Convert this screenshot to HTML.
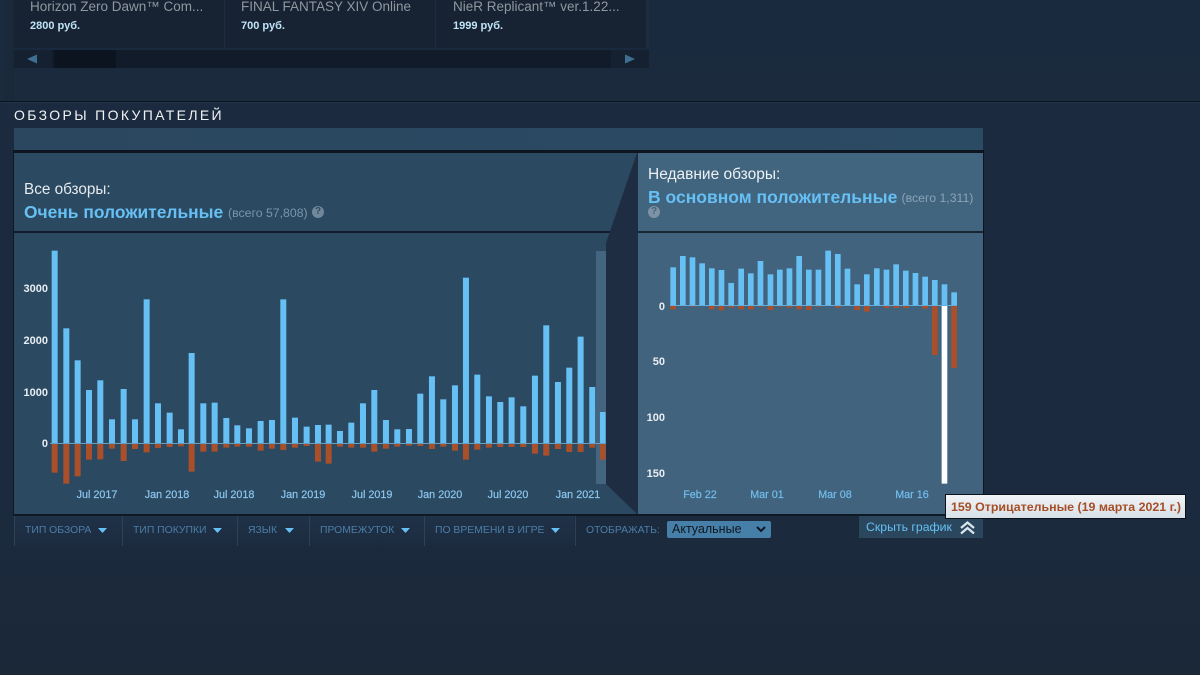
<!DOCTYPE html>
<html><head><meta charset="utf-8"><title>Обзоры покупателей</title>
<style>
html,body{margin:0;padding:0;width:1200px;height:675px;overflow:hidden;background:#1b2838;font-family:"Liberation Sans",Arial,sans-serif}
div,span{position:absolute;white-space:nowrap}
.y{width:30px;text-align:right;font-size:11px;line-height:13px;font-weight:bold;color:#e8eef3}
.x{top:489px;width:60px;text-align:center;font-size:10.8px;line-height:13px;color:#8cc6ee;-webkit-text-stroke:.2px #8cc6ee}
.x2{color:#72bdec;-webkit-text-stroke:.2px #72bdec}
.f{top:524px;font-size:10.4px;line-height:13px;color:#4b7ea8}
.t{top:-1px;font-size:13.5px;line-height:16px;color:#8f98a0}
.p{top:19px;font-size:11px;line-height:14px;color:#bfe3f7;font-weight:bold}
.s{top:516px;width:1px;height:30px;background:#2c4258}
</style></head><body>
<div style="left:0;top:0;width:1200px;height:675px;background:linear-gradient(#1a2a3e 0,#1b2a3d 101px,#1b2a3e 101px,#1b2a3e 500px,#1b2838 675px)"></div>
<div style="left:0;top:0;width:14px;height:100px;background:linear-gradient(90deg,#1b2a3e,#1a2739)"></div>
<!-- carousel -->
<div style="left:14px;top:0;width:635px;height:48px;background:#172232"></div>
<div style="left:224px;top:0;width:1px;height:48px;background:#1d2c3f"></div>
<div style="left:435px;top:0;width:1px;height:48px;background:#1d2c3f"></div>
<div style="left:646px;top:0;width:3px;height:48px;background:#1d2c3f"></div>
<div style="left:14px;top:50px;width:635px;height:18px;background:#111b29"></div>
<div style="left:14px;top:50px;width:38px;height:18px;background:#152131"></div>
<div style="left:611px;top:50px;width:38px;height:18px;background:#152131"></div>
<div style="left:54px;top:50px;width:62px;height:18px;background:#0c1420;border-radius:2px"></div>
<svg style="position:absolute;left:0;top:50px" width="660" height="18"><polygon points="27,9 37,4.500 37,13.500" fill="#3e6f92"/><polygon points="635,9 625,4.500 625,13.500" fill="#3e6f92"/></svg>
<div class="t" style="left:30px">Horizon Zero Dawn™ Com...</div>
<div class="t" style="left:241px">FINAL FANTASY XIV Online</div>
<div class="t" style="left:453px">NieR Replicant™ ver.1.22...</div>
<div class="p" style="left:30px">2800 руб.</div>
<div class="p" style="left:241px">700 руб.</div>
<div class="p" style="left:453px">1999 руб.</div>
<!-- heading -->
<div style="left:0;top:101px;width:1200px;height:1px;background:#0b111b"></div>
<div style="left:0;top:102px;width:1200px;height:1px;background:#24364b"></div>
<div style="left:14px;top:107px;font-size:14px;line-height:16px;letter-spacing:2.35px;color:#f0f2f4">ОБЗОРЫ ПОКУПАТЕЛЕЙ</div>
<!-- panels -->
<div style="left:14px;top:128px;width:969px;height:22px;background:linear-gradient(90deg,#2b4760,#2b4a63)"></div>
<div style="left:13px;top:150px;width:971px;height:3px;background:#0e1520"></div>
<div style="left:13px;top:153px;width:1px;height:361px;background:#101a27"></div>
<div style="left:14px;top:153px;width:623px;height:78px;background:#2b4961"></div>
<div style="left:14px;top:231px;width:623px;height:2px;background:#111c2a"></div>
<div style="left:14px;top:233px;width:623px;height:281px;background:#2b4961"></div>
<div style="left:638px;top:153px;width:345px;height:78px;background:#41647f"></div>
<div style="left:638px;top:231px;width:345px;height:2px;background:#182736"></div>
<div style="left:638px;top:233px;width:345px;height:281px;background:#41637e"></div>
<div style="left:983px;top:150px;width:1px;height:364px;background:#0e1520"></div>
<svg style="position:absolute;left:0;top:0" width="700" height="520"><polygon points="637,153 638,153 638,514 637,514 606,484 606,243" fill="#1f2d42"/></svg>
<div style="left:596px;top:251px;width:10px;height:233px;background:#44657f"></div>
<div style="left:13px;top:514px;width:971px;height:2px;background:#0f1825"></div>
<!-- charts -->
<svg style="position:absolute;left:0;top:240px" width="640" height="300"><g fill="#66c0f4" transform="scale(0.3333)">
<rect x="155" y="32" width="18" height="578"/><rect x="190" y="265" width="18" height="345"/><rect x="224" y="361" width="18" height="249"/><rect x="258" y="450" width="18" height="160"/><rect x="292" y="421" width="18" height="189"/><rect x="327" y="538" width="18" height="72"/><rect x="362" y="447" width="18" height="163"/><rect x="396" y="538" width="18" height="72"/><rect x="431" y="178" width="18" height="432"/><rect x="465" y="490" width="18" height="120"/><rect x="500" y="518" width="18" height="92"/><rect x="534" y="568" width="18" height="42"/><rect x="566" y="339" width="18" height="271"/><rect x="601" y="490" width="18" height="120"/><rect x="635" y="488" width="18" height="122"/><rect x="670" y="534" width="18" height="76"/><rect x="703" y="556" width="18" height="54"/><rect x="738" y="565" width="18" height="45"/><rect x="773" y="543" width="18" height="67"/><rect x="807" y="540" width="18" height="70"/><rect x="841" y="178" width="18" height="432"/><rect x="876" y="533" width="18" height="77"/><rect x="911" y="560" width="18" height="50"/><rect x="945" y="555" width="18" height="55"/>
<rect x="977" y="554" width="18" height="56"/><rect x="1011" y="573" width="18" height="37"/><rect x="1045" y="548" width="18" height="62"/><rect x="1080" y="490" width="18" height="120"/><rect x="1114" y="450" width="18" height="160"/><rect x="1149" y="540" width="18" height="70"/><rect x="1183" y="568" width="18" height="42"/><rect x="1218" y="567" width="18" height="43"/><rect x="1252" y="461" width="18" height="149"/><rect x="1287" y="409" width="18" height="201"/><rect x="1321" y="478" width="18" height="132"/><rect x="1356" y="436" width="18" height="174"/><rect x="1389" y="113" width="18" height="497"/><rect x="1423" y="404" width="18" height="206"/><rect x="1458" y="469" width="18" height="141"/><rect x="1492" y="486" width="18" height="124"/><rect x="1526" y="472" width="18" height="138"/><rect x="1561" y="499" width="18" height="111"/><rect x="1596" y="407" width="18" height="203"/><rect x="1630" y="256" width="18" height="354"/><rect x="1665" y="426" width="18" height="184"/><rect x="1699" y="383" width="18" height="227"/><rect x="1733" y="290" width="18" height="320"/><rect x="1768" y="441" width="18" height="169"/><rect x="1800" y="516" width="17" height="94"/>
</g><g fill="#a9502a" transform="scale(0.3333)">
<rect x="155" y="612" width="18" height="86"/><rect x="190" y="612" width="18" height="119"/><rect x="224" y="612" width="18" height="97"/><rect x="258" y="612" width="18" height="47"/><rect x="292" y="612" width="18" height="46"/><rect x="327" y="612" width="18" height="14"/><rect x="362" y="612" width="18" height="51"/><rect x="396" y="612" width="18" height="15"/><rect x="431" y="612" width="18" height="25"/><rect x="465" y="612" width="18" height="12"/><rect x="500" y="612" width="18" height="9"/><rect x="534" y="612" width="18" height="7"/><rect x="566" y="612" width="18" height="83"/><rect x="601" y="612" width="18" height="23"/><rect x="635" y="612" width="18" height="23"/><rect x="670" y="612" width="18" height="11"/><rect x="703" y="612" width="18" height="8"/><rect x="738" y="612" width="18" height="8"/><rect x="773" y="612" width="18" height="20"/><rect x="807" y="612" width="18" height="14"/><rect x="841" y="612" width="18" height="18"/><rect x="876" y="612" width="18" height="11"/><rect x="911" y="612" width="18" height="6"/><rect x="945" y="612" width="18" height="53"/>
<rect x="977" y="612" width="18" height="59"/><rect x="1011" y="612" width="18" height="8"/><rect x="1045" y="612" width="18" height="11"/><rect x="1080" y="612" width="18" height="11"/><rect x="1114" y="612" width="18" height="23"/><rect x="1149" y="612" width="18" height="14"/><rect x="1183" y="612" width="18" height="8"/><rect x="1218" y="612" width="18" height="5"/><rect x="1252" y="612" width="18" height="6"/><rect x="1287" y="612" width="18" height="15"/><rect x="1321" y="612" width="18" height="8"/><rect x="1356" y="612" width="18" height="20"/><rect x="1389" y="612" width="18" height="47"/><rect x="1423" y="612" width="18" height="17"/><rect x="1458" y="612" width="18" height="11"/><rect x="1492" y="612" width="18" height="9"/><rect x="1526" y="612" width="18" height="9"/><rect x="1561" y="612" width="18" height="9"/><rect x="1596" y="612" width="18" height="29"/><rect x="1630" y="612" width="18" height="35"/><rect x="1665" y="612" width="18" height="15"/><rect x="1699" y="612" width="18" height="24"/><rect x="1733" y="612" width="18" height="24"/><rect x="1768" y="612" width="18" height="11"/><rect x="1800" y="612" width="17" height="47"/>
</g><rect x="50" y="203" width="556" height="1" fill="#6a9cbd"/></svg>
<svg style="position:absolute;left:620px;top:120px" width="380" height="380"><g fill="#66c0f4" transform="scale(0.3333)">
<rect x="151" y="442" width="17" height="114"/><rect x="180" y="408" width="17" height="148"/><rect x="209" y="412" width="17" height="144"/><rect x="238" y="430" width="17" height="126"/><rect x="267" y="445" width="17" height="111"/><rect x="296" y="450" width="17" height="106"/><rect x="325" y="489" width="17" height="67"/><rect x="355" y="446" width="17" height="110"/><rect x="384" y="460" width="17" height="96"/><rect x="413" y="423" width="17" height="133"/><rect x="443" y="463" width="17" height="93"/><rect x="471" y="449" width="17" height="107"/><rect x="500" y="445" width="17" height="111"/><rect x="529" y="408" width="17" height="148"/><rect x="558" y="449" width="17" height="107"/><rect x="587" y="449" width="17" height="107"/><rect x="616" y="392" width="17" height="164"/><rect x="645" y="402" width="17" height="154"/><rect x="674" y="446" width="17" height="110"/><rect x="703" y="493" width="17" height="63"/><rect x="732" y="463" width="17" height="93"/><rect x="762" y="445" width="17" height="111"/><rect x="791" y="449" width="17" height="107"/><rect x="820" y="433" width="17" height="123"/><rect x="849" y="452" width="17" height="104"/><rect x="878" y="459" width="17" height="97"/><rect x="907" y="470" width="17" height="86"/><rect x="936" y="480" width="17" height="76"/><rect x="965" y="493" width="17" height="63"/><rect x="994" y="517" width="17" height="39"/>
</g><g fill="#a9502a" transform="scale(0.3333)">
<rect x="151" y="558" width="17" height="10"/><rect x="209" y="558" width="17" height="2"/><rect x="267" y="558" width="17" height="10"/><rect x="296" y="558" width="17" height="13"/><rect x="325" y="558" width="17" height="5"/><rect x="355" y="558" width="17" height="10"/><rect x="384" y="558" width="17" height="10"/><rect x="413" y="558" width="17" height="2"/><rect x="443" y="558" width="17" height="12"/><rect x="471" y="558" width="17" height="2"/><rect x="500" y="558" width="17" height="5"/><rect x="529" y="558" width="17" height="10"/><rect x="558" y="558" width="17" height="12"/><rect x="587" y="558" width="17" height="2"/><rect x="645" y="558" width="17" height="5"/><rect x="703" y="558" width="17" height="12"/><rect x="732" y="558" width="17" height="17"/><rect x="791" y="558" width="17" height="6"/><rect x="820" y="558" width="17" height="6"/><rect x="849" y="558" width="17" height="6"/><rect x="907" y="558" width="17" height="8"/>
<rect x="936" y="558" width="17" height="147"/><rect x="994" y="558" width="17" height="186"/>
<rect x="965" y="557" width="17" height="534" fill="#fff"/>
</g><rect x="50" y="185" width="287" height="1" fill="#66aed9"/></svg>
<!-- y labels -->
<div class="y" style="left:18px;top:283px">3000</div>
<div class="y" style="left:18px;top:335px">2000</div>
<div class="y" style="left:18px;top:387px">1000</div>
<div class="y" style="left:18px;top:438px">0</div>
<div class="y" style="left:635px;top:301px">0</div>
<div class="y" style="left:635px;top:356px">50</div>
<div class="y" style="left:635px;top:412px">100</div>
<div class="y" style="left:635px;top:468px">150</div>
<!-- x labels -->
<div class="x" style="left:67px">Jul 2017</div>
<div class="x" style="left:137px">Jan 2018</div>
<div class="x" style="left:204px">Jul 2018</div>
<div class="x" style="left:273px">Jan 2019</div>
<div class="x" style="left:342px">Jul 2019</div>
<div class="x" style="left:410px">Jan 2020</div>
<div class="x" style="left:478px">Jul 2020</div>
<div class="x" style="left:548px">Jan 2021</div>
<div class="x x2" style="left:670px">Feb 22</div>
<div class="x x2" style="left:737px">Mar 01</div>
<div class="x x2" style="left:805px">Mar 08</div>
<div class="x x2" style="left:882px">Mar 16</div>
<!-- summaries -->
<div style="left:24px;top:181px;font-size:15.300px;line-height:17px;color:#e6eaee">Все обзоры:</div>
<div style="left:24px;top:202px;font-size:17.400px;line-height:20px;font-weight:bold;color:#66c0f4">Очень положительные</div>
<div style="left:228px;top:206px;font-size:12.300px;line-height:15px;color:#7b95aa">(всего 57,808)</div>
<div style="left:312px;top:206px;width:12px;height:12px;border-radius:6px;background:#71889b;color:#2b4961;font-size:10px;line-height:12px;font-weight:bold;text-align:center">?</div>
<div style="left:648px;top:166px;font-size:15.500px;line-height:17px;color:#eef1f4">Недавние обзоры:</div>
<div style="left:648px;top:187px;font-size:17.500px;line-height:20px;font-weight:bold;color:#66c0f4">В основном положительные</div>
<div style="left:901.500px;top:191px;font-size:12.300px;line-height:15px;color:#8ba4b8">(всего 1,311)</div>
<div style="left:648px;top:206px;width:12px;height:12px;border-radius:6px;background:#7f93a4;color:#41647f;font-size:10px;line-height:12px;font-weight:bold;text-align:center">?</div>
<!-- filter bar -->
<div style="left:14px;top:516px;width:560px;height:30px;background:linear-gradient(#1f3248,#1c2b3f)"></div>
<div class="s" style="left:14px"></div>
<div class="s" style="left:122px"></div>
<div class="s" style="left:237px"></div>
<div class="s" style="left:309px"></div>
<div class="s" style="left:424px"></div>
<div class="s" style="left:575px"></div>
<div class="f" style="left:25px">ТИП ОБЗОРА</div>
<div class="f" style="left:133px">ТИП ПОКУПКИ</div>
<div class="f" style="left:248px">ЯЗЫК</div>
<div class="f" style="left:320px">ПРОМЕЖУТОК</div>
<div class="f" style="left:435px">ПО ВРЕМЕНИ В ИГРЕ</div>
<div class="f" style="left:586px">ОТОБРАЖАТЬ:</div>
<svg style="position:absolute;left:0;top:520px" width="600" height="20"><g fill="#66c0f4"><polygon points="98,8 107,8 102.500,13"/><polygon points="213,8 222,8 217.500,13"/><polygon points="285,8 294,8 289.500,13"/><polygon points="401,8 410,8 405.500,13"/><polygon points="551,8 560,8 555.500,13"/></g></svg>
<div style="left:667px;top:521px;width:104px;height:17px;border-radius:2px;background:#4680a8"></div>
<div style="left:672px;top:522px;font-size:12.500px;line-height:15px;color:#10161f">Актуальные</div>
<svg style="position:absolute;left:755px;top:525px" width="12" height="9"><path d="M2 2 L6 6 L10 2" fill="none" stroke="#0d1520" stroke-width="2"/></svg>
<!-- hide graph -->
<div style="left:859px;top:516px;width:124px;height:22px;background:#2a475e"></div>
<div style="left:866px;top:520px;font-size:12.300px;line-height:15px;color:#66c0f4">Скрыть график</div>
<svg style="position:absolute;left:959px;top:520px" width="17" height="15"><path d="M2 8 L8.500 2.500 L15 8 M2 13.500 L8.500 8 L15 13.500" fill="none" stroke="#d9e6ee" stroke-width="2.300"/></svg>
<!-- tooltip -->
<div style="left:945px;top:494px;width:241px;height:25px;background:linear-gradient(#f2f4f6,#d7e0e8);border:1px solid #0c1119;box-sizing:border-box"></div>
<div style="left:951px;top:500px;font-size:12.400px;line-height:15px;font-weight:bold;color:#a64f27">159 Отрицательные (19 марта 2021 г.)</div>
</body></html>
